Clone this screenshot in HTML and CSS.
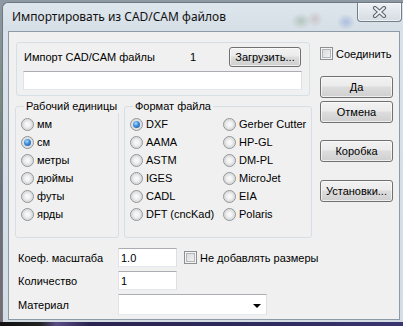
FILE: index.html
```html
<!DOCTYPE html>
<html>
<head>
<meta charset="utf-8">
<link rel="stylesheet" href="styles.css">
</head>
<body>
<div class="window">
  <div class="titlebar">
    <span class="title">Импортировать из CAD/CAM файлов</span>
    <div class="close">
      <svg width="15" height="12" viewBox="0 0 15 12">
        <path d="M3 2 L12 10 M12 2 L3 10" stroke="#5b6570" stroke-width="4.2" stroke-linecap="round" fill="none"/>
        <path d="M3 2 L12 10 M12 2 L3 10" stroke="#eef1f4" stroke-width="2" stroke-linecap="round" fill="none"/>
      </svg>
    </div>
  </div>
  <div class="client">
    <div class="main">
      <div class="importpanel">
        <div class="importrow">
          <span class="implabel">Импорт CAD/CAM файлы</span>
          <span class="impcount">1</span>
          <div class="btn btn-load">Загрузить...</div>
        </div>
        <div class="textbox wide"></div>
      </div>
      <div class="groups">
        <fieldset class="group units">
          <legend>Рабочий единицы</legend>
          <div class="radio-list">
            <div class="radio"><span class="dot"></span>мм</div>
            <div class="radio"><span class="dot on"></span>см</div>
            <div class="radio"><span class="dot"></span>метры</div>
            <div class="radio"><span class="dot"></span>дюймы</div>
            <div class="radio"><span class="dot"></span>футы</div>
            <div class="radio"><span class="dot"></span>ярды</div>
          </div>
        </fieldset>
        <fieldset class="group formats">
          <legend>Формат файла</legend>
          <div class="radio-grid">
            <div class="radio"><span class="dot on"></span>DXF</div>
            <div class="radio"><span class="dot"></span>AAMA</div>
            <div class="radio"><span class="dot"></span>ASTM</div>
            <div class="radio"><span class="dot"></span>IGES</div>
            <div class="radio"><span class="dot"></span>CADL</div>
            <div class="radio"><span class="dot"></span>DFT (cncKad)</div>
            <div class="radio"><span class="dot"></span>Gerber Cutter</div>
            <div class="radio"><span class="dot"></span>HP-GL</div>
            <div class="radio"><span class="dot"></span>DM-PL</div>
            <div class="radio"><span class="dot"></span>MicroJet</div>
            <div class="radio"><span class="dot"></span>EIA</div>
            <div class="radio"><span class="dot"></span>Polaris</div>
          </div>
        </fieldset>
      </div>
      <div class="fields">
        <div class="field">
          <span class="flabel">Коеф. масштаба</span>
          <div class="textbox small">1.0</div>
          <div class="check nodims"><span class="box"></span>Не добавлять размеры</div>
        </div>
        <div class="field">
          <span class="flabel">Количество</span>
          <div class="textbox small">1</div>
        </div>
        <div class="field tall">
          <span class="flabel">Материал</span>
          <div class="combo"><span class="arrow"></span></div>
        </div>
      </div>
    </div>
    <div class="side">
      <div class="check join"><span class="box"></span>Соединить</div>
      <div class="btn side-btn b-ok">Да</div>
      <div class="btn side-btn b-cancel">Отмена</div>
      <div class="btn side-btn b-box">Коробка</div>
      <div class="btn side-btn b-set">Установки...</div>
    </div>
  </div>
</div>
<div class="taskbar"></div>
</body>
</html>
```

FILE: styles.css
```css
* { box-sizing: border-box; }
html, body { margin: 0; padding: 0; }
body {
  width: 403px;
  height: 326px;
  overflow: hidden;
  font-family: "Liberation Sans", Arial, sans-serif;
  font-size: 11px;
  color: #000;
  background: linear-gradient(to bottom, #8e99a4 0, #7b8a7e 30%, #6a6f78 60%, #7a6a70 100%);
}
.window {
  margin: 2px 0 0 2px;
  width: 401px;
  height: 320px;
  border: 1px solid #6c7884;
  border-right: none;
  border-bottom: none;
  border-radius: 6px 0 0 0;
  background: linear-gradient(#dae3eb, #d4dce4);
  display: flex;
  flex-direction: column;
}
.titlebar {
  height: 28px;
  flex: none;
  display: flex;
  align-items: flex-start;
  padding-left: 9px;
  border-radius: 6px 0 0 0;
  background:
    radial-gradient(ellipse 10px 8px at 298px 18px, rgba(110,150,110,0.35), transparent),
    radial-gradient(ellipse 8px 8px at 312px 16px, rgba(170,120,110,0.25), transparent),
    radial-gradient(ellipse 9px 8px at 343px 19px, rgba(90,130,200,0.35), transparent),
    linear-gradient(#dde5ed, #d6dee6);
}
.title {
  font-family: "Noto Sans", "Open Sans", sans-serif;
  font-size: 12px;
  line-height: 28px;
  color: #111;
}
.close {
  margin-left: auto;
  margin-right: 1px;
  width: 45px;
  height: 19px;
  border: 1px solid #747e89;
  border-top: none;
  border-radius: 0 0 4px 4px;
  background: linear-gradient(#eef1f4, #d5dce3);
  box-shadow: inset 0 0 0 1px rgba(255,255,255,0.6);
  display: flex;
  align-items: center;
  justify-content: center;
}
.client {
  flex: none;
  margin: 0 3px 0 5px;
  height: 289px;
  border: 1px solid #8d9aa7;
  background: #f0f0f0;
  display: flex;
  padding: 10px 0 0 6px;
}
.main {
  width: 295px;
  flex: none;
}
.importpanel {
  margin-left: 1px;
  width: 294px;
  height: 54px;
  border: 1px solid #d5dfe5;
  border-radius: 3px;
  padding: 4px 7px 0 6px;
}
.importrow {
  height: 20px;
  display: flex;
  align-items: center;
  margin-bottom: 4px;
}
.implabel {
  margin-left: 1px;
  width: 166px;
  flex: none;
}
.btn {
  border: 1px solid #707070;
  border-radius: 3px;
  background: linear-gradient(#f2f2f2 0%, #ebebeb 45%, #dddddd 50%, #cfcfcf 100%);
  box-shadow: inset 0 0 0 1px rgba(252,252,252,0.7);
  display: flex;
  align-items: center;
  justify-content: center;
  white-space: nowrap;
}
.btn-load {
  margin-left: auto;
  margin-right: 1px;
  width: 72px;
  height: 20px;
}
.textbox {
  background: #fff;
  border: 1px solid;
  border-color: #abadb3 #dbdfe6 #e3e9ef #e2e3ea;
  height: 19px;
  padding-left: 2px;
  display: flex;
  align-items: center;
}
.textbox.wide { width: 100%; }
.textbox.small { width: 59px; flex: none; }
.groups {
  display: flex;
  gap: 5px;
  margin-top: 4px;
}
.group {
  margin: 0;
  padding: 2px 0 14px 5px;
  border: 1px solid #d5dfe5;
  border-radius: 3px;
  min-width: 0;
  flex: none;
}
.group legend {
  padding: 0 2px;
  margin-left: 3px;
  line-height: 13px;
  font-size: 11px;
  white-space: nowrap;
}
.units { width: 104px; }
.formats { width: 188px; }
.radio-grid {
  display: grid;
  grid-template-columns: 93px auto;
  grid-template-rows: repeat(6, 18px);
  grid-auto-flow: column;
}
.radio {
  height: 18px;
  display: flex;
  align-items: center;
  gap: 3px;
  white-space: nowrap;
}
.dot {
  width: 13px;
  height: 13px;
  flex: none;
  border-radius: 50%;
  border: 1px solid #8f9498;
  background: radial-gradient(circle at 50% 50%, #fbfbfb 0, #f2f2f2 2.5px, #d9dadb 5px, #eeeeee 5.5px);
  position: relative;
}
.dot.on::after {
  content: "";
  position: absolute;
  left: 2px;
  top: 2px;
  width: 7px;
  height: 7px;
  border-radius: 50%;
  background: radial-gradient(circle at 40% 35%, #a6dcff 0, #3d8ad8 45%, #1b4f9a 100%);
}
.fields {
  margin-top: 10px;
  padding-left: 3px;
}
.field {
  display: flex;
  align-items: center;
  height: 19px;
  margin-bottom: 4px;
}
.field.tall { height: 21px; }
.flabel {
  width: 100px;
  flex: none;
}
.check {
  display: flex;
  align-items: center;
  gap: 3px;
  white-space: nowrap;
}
.box {
  width: 13px;
  height: 13px;
  flex: none;
  border: 1px solid #8e8f8f;
  background: linear-gradient(135deg, #d4d6d8, #f6f6f6);
  box-shadow: inset 0 0 0 1px #f4f4f4, inset 0 0 0 2px #b2b6ba;
}
.nodims { margin-left: 7px; }
.combo {
  width: 149px;
  height: 21px;
  background: #fff;
  border: 1px solid;
  border-color: #abadb3 #dbdfe6 #e3e9ef #e2e3ea;
  display: flex;
  align-items: center;
  justify-content: flex-end;
  padding-right: 5px;
}
.arrow {
  width: 0;
  height: 0;
  border-left: 4px solid transparent;
  border-right: 4px solid transparent;
  border-top: 4px solid #000;
  margin-top: 2px;
}
.side {
  margin-left: 10px;
  width: 75px;
  flex: none;
}
.join {
  margin-top: 5px;
  height: 13px;
}
.side-btn {
  width: 73px;
  height: 22px;
}
.b-ok { margin-top: 16px; }
.b-cancel { margin-top: 3px; }
.b-box { margin-top: 17px; }
.b-set { margin-top: 18px; }
.taskbar {
  height: 4px;
  background: linear-gradient(90deg, #111 0, #222 10%, #5a4c86 14%, #2b2450 22%, #2d2a5c 60%, #3a3570 100%);
}
```
